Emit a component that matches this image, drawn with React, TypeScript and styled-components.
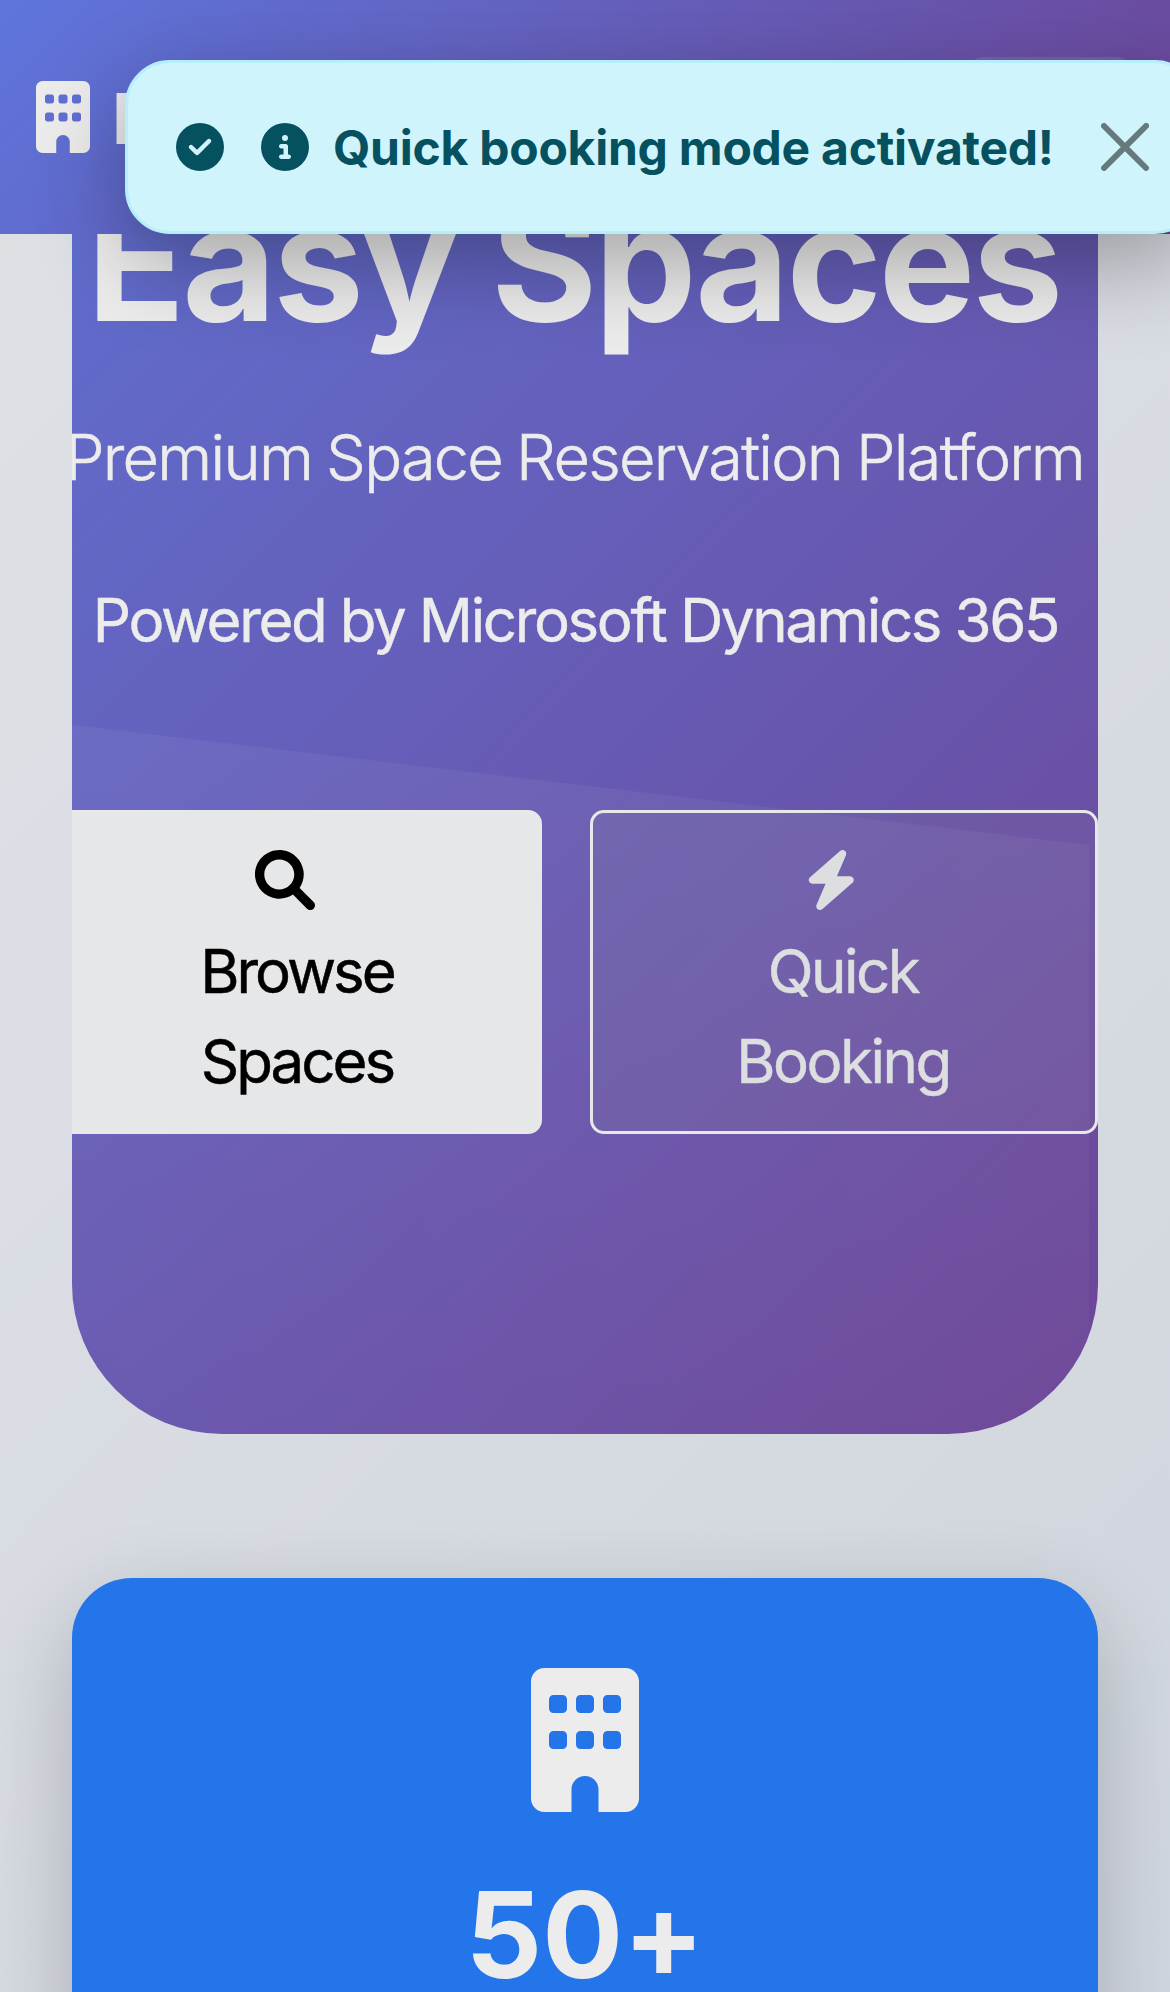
import React from 'react';
import styled, { createGlobalStyle } from 'styled-components';
import { FaBolt, FaBuilding, FaCircleCheck, FaCircleInfo } from 'react-icons/fa6';

const GlobalStyle = createGlobalStyle`
  *, *::before, *::after { box-sizing: border-box; }
  html, body { margin: 0; padding: 0; }
  body { font-family: Inter, "Liberation Sans", sans-serif; font-feature-settings: "calt" 0; }
  svg { display: block; flex: none; }
  h1, p { margin: 0; font-weight: inherit; }
`;

const Page = styled.div`
  position: relative;
  display: flex;
  flex-direction: column;
  height: 1992px;
  overflow: hidden;
  color: #ececec;
  background: linear-gradient(135deg, #dee2e4 0%, #dadde4 40%, #d5d9e0 70%, #d0d6df 100%);
`;

const Header = styled.header`
  position: relative;
  z-index: 2;
  flex: none;
  display: flex;
  align-items: center;
  height: 234px;
  padding: 0 36px;
  background: linear-gradient(135deg, #5e75dc 0%, #6d4596 100%);
`;

const Brand = styled.div`
  display: flex;
  align-items: center;
  gap: 22px;
  font-size: 70px;
  font-weight: 700;
  line-height: 84px;
  white-space: nowrap;
`;

const BrandName = styled.span`
  padding-top: 3px;
`;

const MenuButton = styled.button`
  width: 168px;
  height: 120px;
  margin-left: auto;
  border: 0;
  border-radius: 18px;
  background: rgba(255, 255, 255, 0.1);
`;

const Toast = styled.div`
  position: absolute;
  z-index: 3;
  top: 60px;
  left: 125px;
  display: flex;
  align-items: center;
  width: 1075px;
  height: 174px;
  padding-left: 48px;
  border: 3px solid #b6effb;
  border-radius: 45px;
  background: #cff4fc;
  color: #055160;
  box-shadow: 0 30px 90px rgba(0, 0, 0, 0.3);
`;

const ToastText = styled.div`
  display: flex;
  align-items: center;
  gap: 24px;
  margin-left: 37px;
  font-size: 48px;
  font-weight: 700;
  line-height: 72px;
  letter-spacing: -0.24px;
  white-space: nowrap;

  span {
    padding-top: 2px;
  }
`;

const CloseButton = styled.button`
  position: absolute;
  top: 60px;
  right: 48px;
  padding: 0;
  border: 0;
  background: none;
  opacity: 0.5;
`;

const Hero = styled.section`
  position: relative;
  flex: none;
  height: 1200px;
  margin: 0 72px;
  overflow: hidden;
  border-radius: 0 0 150px 150px;
  background: linear-gradient(135deg, #5e75d8 0%, #6d4596 100%) bottom / 100% 1684px;

  &::before {
    content: '';
    position: absolute;
    inset: 491px 9px 0 0;
    background: linear-gradient(rgba(255, 255, 255, 0.05), rgba(255, 255, 255, 0.025));
    clip-path: polygon(0 0, 100% 120px, 100% 100%, 0 100%);
  }
`;

const HeroContent = styled.div`
  position: relative;
  display: flex;
  flex-direction: column;
  align-items: center;
  width: 1044px;
  margin-left: -18px;
  white-space: nowrap;
`;

const Title = styled.h1`
  margin-top: -62px;
  padding-right: 5px;
  font-size: 162px;
  font-weight: 700;
  line-height: 180px;
  letter-spacing: -2.9px;
`;

const Subtitle = styled.p`
  margin-top: 58px;
  padding-right: 3px;
  font-size: 63px;
  font-weight: 300;
  line-height: 94px;
  letter-spacing: -1.75px;
  word-spacing: -2px;
  -webkit-text-stroke: 0.6px currentColor;
`;

const Powered = styled.p`
  margin-top: 71px;
  padding-right: 1px;
  font-size: 60px;
  line-height: 90px;
  letter-spacing: -2.38px;
  -webkit-text-stroke: 0.4px currentColor;
`;

const Actions = styled.div`
  display: flex;
  gap: 48px;
  width: 100%;
  margin-top: 145px;
`;

const ActionButton = styled.button<{ $outline?: boolean }>`
  display: flex;
  flex-direction: column;
  align-items: center;
  width: ${(p) => (p.$outline ? 508 : 488)}px;
  height: 324px;
  padding: 24px 0;
  border: 3px solid #e6e8e9;
  border-radius: 14px;
  background: ${(p) => (p.$outline ? 'rgba(160, 160, 160, 0.1)' : '#e6e7e9')};
  color: ${(p) => (p.$outline ? '#dcdee0' : '#000')};
  font: 400 60px/90px Inter, 'Liberation Sans', sans-serif;
  letter-spacing: ${(p) => (p.$outline ? -2.5 : -3)}px;
  -webkit-text-stroke: 0.5px currentColor;

  svg {
    margin: 13px 26px 16px 0;
  }

  span {
    padding-right: 2px;
  }
`;

const StatCard = styled.section`
  flex: none;
  display: flex;
  flex-direction: column;
  align-items: center;
  height: 600px;
  margin: 144px 72px 0;
  padding-top: 90px;
  border-radius: 60px;
  background: #2474ea;
  box-shadow: 0 30px 90px rgba(0, 0, 0, 0.2);
`;

const StatValue = styled.div`
  margin-top: 51px;
  font-size: 120px;
  font-weight: 700;
  line-height: 144px;
`;

const SearchIcon = () => (
  <svg width="60" height="60" viewBox="0 0 512 512" fill="currentColor">
    <path d="M500.3 443.7l-119.7-119.7c27.22-40.41 40.65-90.9 33.46-144.7C401.8 87.79 326.8 13.32 235.2 1.723C99.01-15.51-15.51 99.01 1.724 235.2c11.6 91.64 86.08 166.7 177.6 178.9c53.8 7.189 104.3-6.236 144.7-33.46l119.7 119.7c15.62 15.62 40.95 15.62 56.57 0C515.9 484.7 515.9 459.3 500.3 443.7zM79.1 208c0-70.58 57.42-128 128-128s128 57.42 128 128c0 70.58-57.42 128-128 128S79.1 278.6 79.1 208z" />
  </svg>
);

export default function App() {
  return (
    <Page>
      <GlobalStyle />
      <Header>
        <Brand>
          <FaBuilding size={72} style={{ width: 54 }} />
          <BrandName>Easy Spaces</BrandName>
        </Brand>
        <MenuButton aria-label="Menu" />
      </Header>
      <Toast role="alert">
        <FaCircleCheck size={48} />
        <ToastText>
          <FaCircleInfo size={48} />
          <span>Quick booking mode activated!</span>
        </ToastText>
        <CloseButton aria-label="Close">
          <svg width="48" height="48" viewBox="0 0 16 16" fill="#000">
            <path d="M.293.293a1 1 0 0 1 1.414 0L8 6.586 14.293.293a1 1 0 1 1 1.414 1.414L9.414 8l6.293 6.293a1 1 0 0 1-1.414 1.414L8 9.414l-6.293 6.293a1 1 0 0 1-1.414-1.414L6.586 8 .293 1.707a1 1 0 0 1 0-1.414z" />
          </svg>
        </CloseButton>
      </Toast>
      <Hero>
        <HeroContent>
          <Title>Easy Spaces</Title>
          <Subtitle>Premium Space Reservation Platform</Subtitle>
          <Powered>Powered by Microsoft Dynamics 365</Powered>
          <Actions>
            <ActionButton>
              <SearchIcon />
              <span>Browse</span>
              <span>Spaces</span>
            </ActionButton>
            <ActionButton $outline>
              <FaBolt size={60} style={{ width: 52.5 }} />
              <span>Quick</span>
              <span>Booking</span>
            </ActionButton>
          </Actions>
        </HeroContent>
      </Hero>
      <StatCard>
        <FaBuilding size={144} style={{ width: 108 }} />
        <StatValue>50+</StatValue>
      </StatCard>
    </Page>
  );
}
